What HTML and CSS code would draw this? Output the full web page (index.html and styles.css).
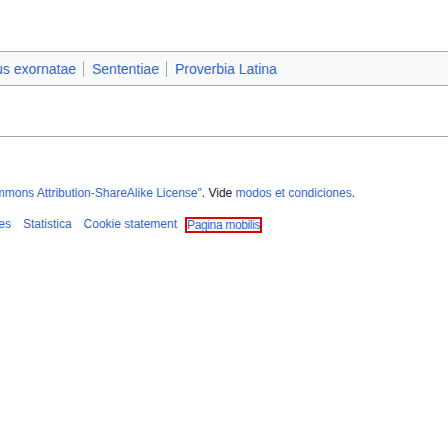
FILE: index.html
```
<!DOCTYPE html>
<html lang="la">
<head>
<meta charset="utf-8">
<title>Vicipaedia</title>
<link rel="stylesheet" href="styles.css">
</head>
<body>
<div class="page">
  <div class="navbox">
    <span class="nav-item first"><a href="#">Libellus exornatae</a></span>
    <span class="nav-item"><a href="#">Sententiae</a></span>
    <span class="nav-item"><a href="#">Proverbia Latina</a></span>
  </div>
  <hr class="rule">
  <footer class="footer">
    <p class="license"><span>Textus praesto est sub licentia <a href="#">"Creative Commons Attribution-ShareAlike License"</a>. Vide <a href="#">modos et condiciones</a>.</span></p>
    <ul class="places">
      <li><a href="#">Repudiationes</a></li>
      <li><a href="#">Statistica</a></li>
      <li><a href="#">Cookie statement</a></li>
      <li class="mobile-item"><a class="mobile" href="#">Pagina mobilis</a></li>
    </ul>
  </footer>
</div>
</body>
</html>
```
FILE: styles.css
```
html, body {
  margin: 0;
  padding: 0;
  background: #ffffff;
  overflow: hidden;
}
body {
  font-family: "Liberation Sans", Arial, sans-serif;
  color: #202122;
}
a {
  color: #3366cc;
  text-decoration: none;
}
.page {
  padding-top: 51px;
}
.navbox {
  display: flex;
  align-items: center;
  height: 33px;
  background: #f8f9fa;
  border-top: 1px solid #a2a9b1;
  border-bottom: 1px solid #a2a9b1;
  font-size: 14px;
  line-height: 16px;
  white-space: nowrap;
}
.nav-item {
  flex: none;
  padding: 0 7px 0 8px;
  border-left: 1px solid #a2a9b1;
}
.nav-item.first {
  display: flex;
  justify-content: flex-end;
  width: 76px;
  overflow: hidden;
  padding-left: 0;
  border-left: none;
}
.rule {
  margin: 50px 0 0 0;
  border: 0;
  height: 1px;
  background: #a2a9b1;
}
.footer {
  font-size: 12px;
  line-height: 14px;
  white-space: nowrap;
}
.license {
  display: flex;
  justify-content: flex-end;
  width: 355px;
  margin: 49px 0 0 0;
}
.license span {
  flex: none;
}
.places {
  list-style: none;
  display: flex;
  align-items: flex-start;
  justify-content: flex-end;
  gap: 12px;
  width: 262px;
  padding: 0;
  margin: 17px 0 0 0;
}
.places li {
  flex: none;
}
.places .mobile-item {
  margin-left: -4px;
}
.mobile {
  display: block;
  width: 73px;
  height: 12px;
  line-height: 12px;
  letter-spacing: -0.35px;
  border: 2px solid #e00000;
}
```
